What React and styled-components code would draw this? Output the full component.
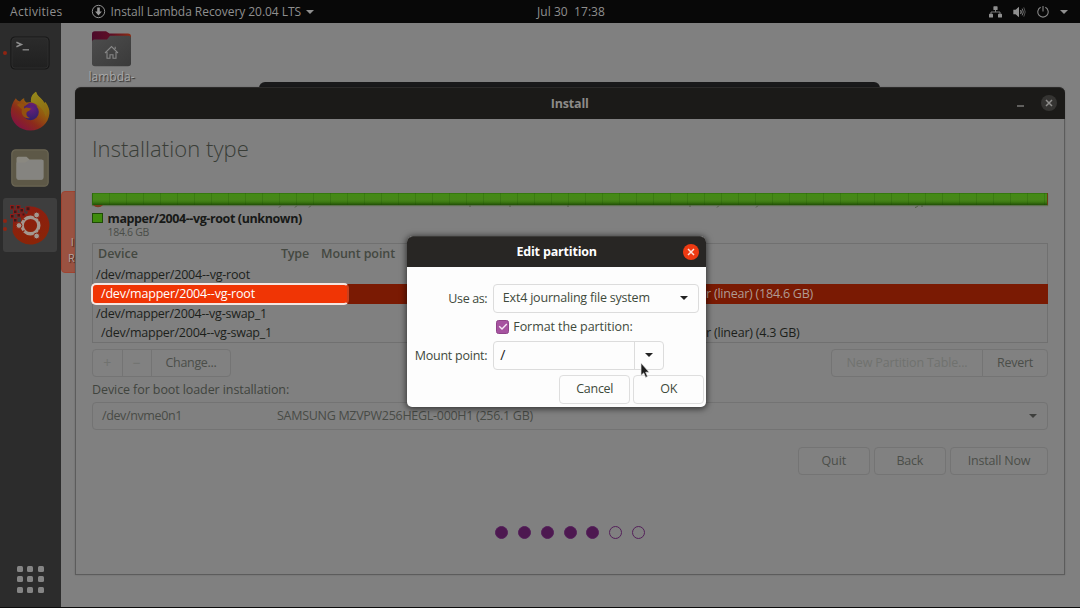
import React from "react";
import styled, { createGlobalStyle } from "styled-components";

const GlobalStyle = createGlobalStyle`
  * { box-sizing: border-box; }
  body { margin: 0; background: #000; overflow: hidden; }
`;

const Label = styled.span`
  flex: none;
  white-space: pre;
  font-family: "Open Sans", "Noto Sans", sans-serif;
  font-size: ${(p) => p.$size || 12.5}px;
  font-weight: ${(p) => p.$weight || 400};
  letter-spacing: ${(p) => p.$ls || 0}px;
  color: ${(p) => p.$color || "inherit"};
  line-height: ${(p) => p.$lh || 18}px;
`;

/* ---------- desktop shell ---------- */

const Desktop = styled.div`
  position: relative;
  display: flex;
  flex-direction: column;
  width: 1080px;
  height: 608px;
  overflow: hidden;
  background: #808080;
  border-bottom: 1px solid #0c0c0c;
`;

const TopBar = styled.header`
  display: grid;
  grid-template-columns: 527px auto 1fr;
  align-items: center;
  flex: none;
  height: 23px;
  padding: 0 12px 0 10px;
  background: #080808;
  color: #8f8f8f;
`;

const BarGroup = styled.div`
  display: flex;
  align-items: center;
  justify-content: ${(p) => (p.$end ? "flex-end" : "flex-start")};
`;

const AppMenu = styled.div`
  display: flex;
  align-items: center;
  gap: 4.5px;
  margin-left: 28.5px;
`;

const TrayIcons = styled.div`
  display: flex;
  align-items: center;
  gap: 11px;
`;

const Caret = styled.i`
  flex: none;
  width: 0;
  height: 0;
  border: ${(p) => p.$s || 4}px solid transparent;
  border-top: ${(p) => (p.$s || 4) + 0.5}px solid ${(p) => p.$color || "#8f8f8f"};
  border-bottom: 0;
`;

const Workspace = styled.div`
  display: flex;
  flex: 1;
  min-height: 0;
`;

const Dock = styled.nav`
  display: flex;
  flex-direction: column;
  align-items: center;
  width: 60.5px;
  padding: 1.5px 0 14.5px;
  background: #2c2c2c;
`;

const DockItem = styled.div`
  position: relative;
  display: grid;
  place-items: center;
  width: 54px;
  height: 54px;
  margin: 1.7px 0;
  border-radius: 3px;
  background: ${(p) => (p.$active ? "#3e3e3e" : "transparent")};
`;

const RunDots = styled.div`
  position: absolute;
  left: ${(p) => p.$x}px;
  top: 0;
  height: 100%;
  display: flex;
  flex-direction: column;
  justify-content: center;
  gap: 4px;
  i {
    width: 4px;
    height: 4px;
    border-radius: 50%;
    background: #8f2412;
  }
`;

const AppsGrid = styled.div`
  display: grid;
  grid-template-columns: repeat(3, 6px);
  gap: 4.3px;
  margin-top: auto;
  i {
    height: 6px;
    border-radius: 1.5px;
    background: #858585;
  }
`;

const DesktopArea = styled.main`
  flex: 1;
  padding: 7px 0 0 28px;
`;

const HomeShortcut = styled.div`
  display: flex;
  flex-direction: column;
  align-items: flex-start;
  gap: 1px;
  color: #a9a9a9;
  text-shadow: 1px 1px 1px #2d2d2d;
`;

const SelectedShortcut = styled.div`
  position: absolute;
  left: 61px;
  top: 191px;
  width: 40px;
  height: 82px;
  padding: 42px 0 0 6px;
  border: 1px solid #a04330;
  border-radius: 4px;
  background: #9a5241;
  color: #b5a49f;
  text-shadow: 1px 1px 1px #3a201a;
  display: flex;
  flex-direction: column;
`;

/* ---------- windows ---------- */

const WindowBehind = styled.div`
  position: absolute;
  left: 259px;
  top: 81.5px;
  width: 621px;
  height: 20px;
  border-radius: 6px 6px 0 0;
  background: #19191a;
`;

const InstallerWindow = styled.section`
  position: absolute;
  left: 74.5px;
  top: 87px;
  width: 990.5px;
  height: 487.5px;
  border-radius: 6px 6px 0 0;
  border: 1px solid #5c5c5c;
  border-top: 0;
  background: #808080;
  box-shadow: 0 0 2px rgba(0, 0, 0, 0.2);
`;

const WindowTitle = styled.div`
  display: grid;
  grid-template-columns: 1fr auto 1fr;
  align-items: center;
  height: 31.5px;
  margin: 0 -1px;
  padding: 1px 8px 0;
  border-radius: 6px 6px 0 0;
  border-top: 1px solid #2b2a29;
  background: #1b1a18;
  color: #8c8b89;
`;

const WindowControls = styled.div`
  display: flex;
  align-items: center;
  justify-content: flex-end;
  gap: 17px;
`;

const Minimise = styled.i`
  width: 7px;
  height: 1.5px;
  margin-top: 4px;
  background: #605f5d;
`;

const RoundButton = styled.span`
  display: grid;
  place-items: center;
  width: 16px;
  height: 16px;
  margin-top: -1px;
  border-radius: 50%;
  background: ${(p) => p.$bg};
`;

const WindowBody = styled.div`
  display: flex;
  flex-direction: column;
  padding: 15.5px 16px 0 16.5px;
  color: #40443e;
`;

const UsageBar = styled.div`
  height: 12px;
  margin-top: 31px;
  background:
    repeating-linear-gradient(90deg, transparent 0 16px, rgba(20, 70, 0, 0.2) 16px 17px),
    linear-gradient(#2f6e0c 0, #448a16 12%, #47861a 55%, #3d7a12 75%, #214f07 100%);
  border-left: 1px solid #2d6a0c;
  border-right: 1px solid #6b3d12;
  box-shadow: 0 1px 1px rgba(50, 90, 20, 0.45);
`;

const BarResidue = styled.div`
  display: flex;
  height: 8px;
  margin-bottom: -1px;
`;

const Legend = styled.div`
  display: flex;
  gap: 5px;
  height: 31px;
`;

const Swatch = styled.i`
  width: 10.5px;
  height: 10.5px;
  margin-top: 0.5px;
  border: 1px solid #1d4a04;
  background: #3f8c0c;
`;

const LegendText = styled.div`
  display: flex;
  flex-direction: column;
  margin-top: -2px;
`;

const Table = styled.div`
  position: relative;
  height: 100px;
  border: 1px solid #707070;
`;

const HeadRow = styled.div`
  display: grid;
  grid-template-columns: 183px 40px auto;
  height: 20.5px;
  padding: 1px 0 0 5px;
  color: #444841;
`;

const DeviceRow = styled.div`
  display: grid;
  grid-template-columns: 605px auto;
  align-items: center;
  height: 19.5px;
  margin: 0 -1px;
  padding-top: 1px;
  padding-left: ${(p) => (p.$child ? 9 : 4)}px;
  color: ${(p) => (p.$selected ? "#b09a93" : "#1c1f1b")};
  background: ${(p) => (p.$selected ? "#7a1a03" : "transparent")};
`;

const Spotlight = styled.div`
  position: absolute;
  left: -2px;
  top: 38.5px;
  width: 257.5px;
  height: 22px;
  padding: 1px 0 0 8px;
  display: flex;
  align-items: center;
  border: 2px solid #f4e6e2;
  border-right-color: #c9401d;
  border-radius: 5px;
  background: #f03505;
  color: #fff;
`;

const Line = styled.div`
  display: flex;
  align-items: center;
  gap: ${(p) => p.$gap || 0}px;
  margin-top: ${(p) => p.$mt || 0}px;
  justify-content: ${(p) => p.$justify || "flex-start"};
`;

const PushButton = styled.button`
  display: flex;
  align-items: center;
  justify-content: center;
  flex: none;
  width: ${(p) => p.$w}px;
  height: 28.5px;
  padding: ${(p) => (p.$light ? 0 : 1)}px 0 0;
  border: 1px solid ${(p) => (p.$light ? "#dedede" : "#747474")};
  border-radius: ${(p) => p.$r || "4px"};
  background: ${(p) => (p.$light ? "#fdfdfd" : "#818181")};
  color: ${(p) => (p.$off ? "#70726f" : p.$light ? "#3f4a3c" : "#4b4e49")};
  & + & {
    ${(p) => p.$joined && "margin-left: -1px;"}
  }
`;

const BootCombo = styled.div`
  display: grid;
  grid-template-columns: 175px 1fr auto;
  align-items: center;
  height: 28px;
  margin-top: 2.5px;
  padding: 1px 10px 0 9px;
  border: 1px solid #737373;
  border-radius: 4px;
  color: #484b46;
`;

const Progress = styled.div`
  display: flex;
  justify-content: center;
  gap: 9.8px;
  margin-top: 50.5px;
`;

const Step = styled.i`
  width: 13px;
  height: 13px;
  border-radius: 50%;
  border: 1px solid #54205a;
  background: ${(p) => (p.$done ? "#4d1850" : "transparent")};
`;

/* ---------- dialog ---------- */

const Dialog = styled.section`
  position: absolute;
  left: 407.3px;
  top: 235.5px;
  width: 298.7px;
  height: 171px;
  border-radius: 6px 6px 5px 5px;
  background: #fdfdfd;
  box-shadow: 0 1px 6px 1px rgba(0, 0, 0, 0.6);
`;

const DialogTitle = styled.div`
  display: grid;
  grid-template-columns: 1fr auto 1fr;
  align-items: center;
  height: 31.5px;
  padding: 1px 7px 0;
  border-radius: 6px 6px 0 0;
  border-top: 1px solid #3b3a38;
  background: #282624;
  color: #fff;
`;

const Form = styled.div`
  display: grid;
  grid-template-columns: 80px 1fr;
  grid-template-rows: 28.5px 28.5px 28.5px;
  column-gap: 5.5px;
  align-items: center;
  justify-items: start;
  padding: 17px 7px 0 0;
  color: #3f4a3c;
`;

const FieldLabel = styled.div`
  justify-self: end;
  display: flex;
  padding-top: ${(p) => p.$drop || 0}px;
`;

const Select = styled.div`
  display: flex;
  align-items: center;
  justify-content: space-between;
  width: 206px;
  height: 28.5px;
  padding: 0 10px 0 9px;
  border: 1px solid #dcdcdc;
  border-radius: 4px;
`;

const Check = styled.div`
  display: flex;
  align-items: center;
  gap: 4px;
  padding-left: 3px;
`;

const CheckBox = styled.span`
  display: grid;
  place-items: center;
  width: 13.5px;
  height: 13.5px;
  border-radius: 2.5px;
  background: #a653a0;
  border: 1px solid #8f4489;
`;

const ComboEntry = styled.div`
  display: grid;
  grid-template-columns: 140px 1fr;
  width: 171px;
  height: 28.5px;
  border: 1px solid #dcdcdc;
  border-radius: 4px;
`;

const EntryCell = styled.div`
  display: flex;
  align-items: center;
  justify-content: ${(p) => (p.$arrow ? "center" : "flex-start")};
  padding-left: ${(p) => (p.$arrow ? 0 : 6.5)}px;
  border-left: ${(p) => (p.$arrow ? "1px solid #dcdcdc" : "0")};
  color: #222;
`;

const DialogActions = styled.div`
  display: flex;
  justify-content: flex-end;
  gap: 3.5px;
  padding: 5.5px 1.5px 0 0;
`;

const Pointer = styled.svg`
  position: absolute;
  left: 640px;
  top: 362px;
`;

/* ---------- icons ---------- */

const DownloadIcon = () => (
  <svg width="15" height="15" viewBox="0 0 15 15">
    <circle cx="7.5" cy="7.5" r="6.2" fill="none" stroke="#8f8f8f" strokeWidth="1" />
    <path d="M6.2 3.4h2.6v4h2.1L7.5 11.4 4.1 7.4h2.1z" fill="#9a9a9a" />
  </svg>
);

const NetworkIcon = () => (
  <svg width="13" height="12" viewBox="0 0 13 12" fill="#8f8f8f">
    <rect x="4.4" y="0.3" width="4.2" height="3.8" rx=".6" />
    <rect x="0" y="7.7" width="4" height="3.8" rx=".6" />
    <rect x="9" y="7.7" width="4" height="3.8" rx=".6" />
    <path d="M6.5 4v2M2 8V6h9v2" fill="none" stroke="#7d7d7d" strokeWidth="1" />
  </svg>
);

const VolumeIcon = () => (
  <svg width="13" height="12" viewBox="0 0 13 12">
    <path d="M.3 3.8h2.2L6 .8v10.4L2.5 8.2H.3z" fill="#8f8f8f" />
    <path d="M7.6 4q1.3 2 0 4" fill="none" stroke="#8f8f8f" strokeWidth="1.2" />
    <path d="M9.2 2.6q2.2 3.4 0 6.8" fill="none" stroke="#777" strokeWidth="1" />
    <path d="M10.8 1.4q2.8 4.6 0 9.2" fill="none" stroke="#5c5c5c" strokeWidth=".9" />
  </svg>
);

const PowerIcon = () => (
  <svg width="12" height="12" viewBox="0 0 12 12" fill="none" stroke="#858585" strokeWidth="1.1">
    <path d="M3.7 1.3a5.2 5.2 0 1 0 4.6 0" />
    <path d="M6 0v5.4" />
  </svg>
);

const CrossIcon = ({ color, size = 8 }) => (
  <svg width={size} height={size} viewBox="0 0 8 8">
    <path d="M1 1l6 6M7 1L1 7" stroke={color} strokeWidth="1.5" />
  </svg>
);

const TerminalIcon = () => (
  <svg width="40" height="34" viewBox="0 0 40 34">
    <defs>
      <linearGradient id="term" x1="0" y1="0" x2="0" y2="1">
        <stop offset="0" stopColor="#2b2b2b" />
        <stop offset="1" stopColor="#202020" />
      </linearGradient>
    </defs>
    <rect x="1" y="1" width="38" height="32" rx="4" fill="url(#term)" stroke="#171717" strokeWidth="1.2" />
    <rect x="2" y="2" width="36" height="30" rx="3" fill="none" stroke="#303030" strokeWidth=".8" />
    <path d="M6.4 6.3l5 2.2-5 2.3" fill="none" stroke="#8e8e8e" strokeWidth="1.5" />
    <path d="M12.6 13.8h6.4" stroke="#858585" strokeWidth="1.4" />
  </svg>
);

const FirefoxIcon = () => (
  <svg width="40" height="40" viewBox="0 0 40 40">
    <defs>
      <linearGradient id="fox" x1=".85" y1=".1" x2=".2" y2=".9">
        <stop offset="0" stopColor="#918516" />
        <stop offset=".4" stopColor="#93570f" />
        <stop offset=".7" stopColor="#8c2a1b" />
        <stop offset="1" stopColor="#83143f" />
      </linearGradient>
      <radialGradient id="globe" cx=".55" cy=".3" r=".7">
        <stop offset="0" stopColor="#661f78" />
        <stop offset="1" stopColor="#312069" />
      </radialGradient>
      <linearGradient id="flame" x1="0" y1="0" x2=".4" y2="1">
        <stop offset="0" stopColor="#948b1c" />
        <stop offset="1" stopColor="#8f6c12" />
      </linearGradient>
    </defs>
    <path d="M5.8 7.2C7 9 8.3 10 10 10.4C11.5 8.6 13 7.5 14.2 7.3C14 9 14.6 10.5 16.5 11.4L21 11C20.5 6.8 22.5 3 26 .8C26.8 4.4 29.8 6.3 32.5 9.2L34.2 12L35.5 11C38.4 15 39.8 19 39.4 22.5C38.5 32.5 30.5 39.5 20.5 39.5C9.5 39.5 1 31.5 .8 21.5C.7 16 2.8 10.8 5.8 7.2Z" fill="url(#fox)" />
    <path d="M21 11C20.5 6.8 22.5 3 26 .8C26.8 4.4 29.8 6.3 32.5 9.2C36.5 13.5 38.2 19 36 26C34 19 29 13 21 11Z" fill="url(#flame)" />
    <circle cx="20.6" cy="21" r="8.2" fill="url(#globe)" />
    <path d="M14 17.5C17 15.5 19 17.5 21 17.5C20.5 19.5 18 20 17 21C15.5 23 17 26 20 27C14 28.5 10.5 23 12 18.5L7 14C9 11.5 12 12 14 13.5Z" fill="#93500f" />
    <path d="M17.5 13.2C20 10.8 25 11.6 27.4 15.4C24.5 14 21 14 17.5 13.2Z" fill="#641e70" />
  </svg>
);

const FilesIcon = () => (
  <svg width="38" height="38" viewBox="0 0 38 38">
    <rect x=".8" y=".8" width="36.4" height="36.4" rx="4" fill="#5d5847" stroke="#6a6553" strokeWidth="1.2" />
    <path d="M5.5 28V9.5Q5.5 7.8 7.2 7.8H15.500L18.5 10.6H30.600Q32.4 10.6 32.4 12.4V29Q32.4 30.8 30.6 30.8H7.200Q5.5 30.8 5.5 29Z" fill="#8a8880" />
    <path d="M5.5 28V13.5H14.500L18 11H32.400V28Q32.4 30.4 30.6 30.4H7.200Q5.5 30.4 5.5 28Z" fill="#858480" />
  </svg>
);

const InstallerIcon = () => (
  <svg width="42" height="42" viewBox="0 0 42 42">
    <defs>
      <linearGradient id="disc" x1="0" y1="0" x2=".3" y2="1">
        <stop offset="0" stopColor="#8e1d12" />
        <stop offset="1" stopColor="#8a2408" />
      </linearGradient>
    </defs>
    <path d="M21 2.5A19 19 0 1 1 3.6 28L4 18H12V10H18Z" fill="url(#disc)" />
    <g fill="#3c1a18" stroke="#8a1d1a" strokeWidth="1">
      <rect x="1.5" y="1.5" width="3.5" height="3.5" />
      <rect x="7.5" y="1.5" width="3.5" height="3.5" />
      <rect x="4.5" y="6" width="3.5" height="3.5" />
      <rect x="11" y="4.5" width="3.5" height="3.5" />
      <rect x="17" y="2.8" width="4" height="4" />
      <rect x="1.5" y="10.5" width="3.5" height="3.5" />
      <rect x="8" y="9.5" width="3.5" height="3.5" />
      <rect x="13" y="9" width="3" height="3" />
      <rect x="4.5" y="14.5" width="3.5" height="3.5" />
    </g>
    <circle cx="21.5" cy="21.5" r="8.3" fill="none" stroke="#a3978f" strokeWidth="3.4" />
    <g fill="#a3978f" stroke="#8a2210" strokeWidth="1">
      <circle cx="10" cy="21.5" r="2.9" />
      <circle cx="27.6" cy="11" r="2.9" />
      <circle cx="27.6" cy="32" r="2.9" />
    </g>
    <path d="M29.5 17l3.500-2M29.5 26l3.500 2M13 14l2.500 2M13 28.500l2.500-2" stroke="#8a2210" strokeWidth="1.2" />
  </svg>
);

const FolderSvg = styled.svg`
  display: block;
`;

const HomeFolderIcon = () => (
  <FolderSvg width="45" height="37" viewBox="0 0 45 37">
    <defs>
      <linearGradient id="back" x1="0" y1="0" x2="1" y2="0">
        <stop offset="0" stopColor="#4c0a2a" />
        <stop offset=".5" stopColor="#5f0f25" />
        <stop offset="1" stopColor="#8c2c13" />
      </linearGradient>
      <linearGradient id="front" x1="0" y1="0" x2="1" y2="1">
        <stop offset="0" stopColor="#4d4d4d" />
        <stop offset="1" stopColor="#3a3a3a" />
      </linearGradient>
    </defs>
    <path d="M3 4Q3 1.2 5.8 1.2H17L20.5 3.500H39Q42 3.5 42 6.500V18H3Z" fill="url(#back)" />
    <path d="M3 12Q3 9.5 5.5 9.500H18L21 5.800H39.500Q42 5.8 42 8.500V33.500Q42 36.3 39 36.300H6Q3 36.3 3 33.500Z" fill="url(#front)" />
    <path d="M16 23l6.500-6.500 6.500 6.500M18 22v6.300h3v-3.600h3v3.600h3V22M26.200 19v-2.300" fill="none" stroke="#888" strokeWidth="1.1" />
  </FolderSvg>
);

const ClippedBadge = () => (
  <svg width="956" height="5" viewBox="0 0 956 5">
    <path d="M1 0H11Q9 2.2 6 2.2Q3 2.2 1 0Z" fill="#7b3a1d" />
    <path d="M187 2.500l2-2M203 2.500l2-2M217 2.500l2-2M378 2v-2M418 2v-2M476 2v-2M598 2v-2M625 2.500l2-2M664 2.500l2-2M823 2.500q2 0 3-2M830 2v-2" stroke="#4f5d40" strokeWidth="1" fill="none" />
  </svg>
);

const rows = [
  { name: "/dev/mapper/2004--vg-root", ls: -0.2 },
  { name: "/dev/mapper/2004--vg-root", ls: -0.2, child: true, selected: true, info: "r (linear) (184.6 GB)", infoLs: -0.22 },
  { name: "/dev/mapper/2004--vg-swap_1", ls: -0.23 },
  { name: "/dev/mapper/2004--vg-swap_1", ls: -0.23, child: true, info: "r (linear) (4.3 GB)", infoLs: -0.2 },
];

export default function App() {
  return (
    <Desktop>
      <GlobalStyle />
      <TopBar>
        <BarGroup>
          <Label $size={12} $ls={0.31}>Activities</Label>
          <AppMenu>
            <DownloadIcon />
            <Label $size={12} $ls={-0.05}>Install Lambda Recovery 20.04 LTS</Label>
            <Caret />
          </AppMenu>
        </BarGroup>
        <Label $size={12} $ls={0.05}>Jul 30  17:38</Label>
        <BarGroup $end>
          <TrayIcons>
            <NetworkIcon />
            <VolumeIcon />
            <PowerIcon />
            <Caret />
          </TrayIcons>
        </BarGroup>
      </TopBar>

      <Workspace>
        <Dock>
          <DockItem>
            <RunDots $x={0}><i /></RunDots>
            <TerminalIcon />
          </DockItem>
          <DockItem><FirefoxIcon /></DockItem>
          <DockItem><FilesIcon /></DockItem>
          <DockItem $active>
            <InstallerIcon />
            <RunDots $x={0}><i /><i /></RunDots>
          </DockItem>
          <AppsGrid>
            {Array.from({ length: 9 }, (_, i) => <i key={i} />)}
          </AppsGrid>
        </Dock>
        <DesktopArea>
          <HomeShortcut>
            <HomeFolderIcon />
            <Label $size={12}>lambda-</Label>
          </HomeShortcut>
        </DesktopArea>
      </Workspace>

      <SelectedShortcut>
        <Label $size={11} $lh={16}> I</Label>
        <Label $size={11} $lh={16}>R</Label>
      </SelectedShortcut>

      <WindowBehind />

      <InstallerWindow>
        <WindowTitle>
          <span />
          <Label $weight={700} $ls={-0.17}>Install</Label>
          <WindowControls>
            <Minimise />
            <RoundButton $bg="#353432"><CrossIcon color="#8f8e8c" /></RoundButton>
          </WindowControls>
        </WindowTitle>
        <WindowBody>
          <Label $size={22} $weight={300} $ls={0.05} $lh={28} $color="#393d37">Installation type</Label>
          <UsageBar />
          <BarResidue><ClippedBadge /></BarResidue>
          <Legend>
            <Swatch />
            <LegendText>
              <Label $weight={700} $ls={-0.39} $lh={17} $color="#171917">mapper/2004--vg-root (unknown)</Label>
              <Label $size={10.5} $ls={-0.3} $lh={11} $color="#4a4d48">184.6 GB</Label>
            </LegendText>
          </Legend>
          <Table>
            <HeadRow>
              <Label $weight={600}>Device</Label>
              <Label $weight={600} $ls={-0.19}>Type</Label>
              <Label $weight={600} $ls={-0.09}>Mount point</Label>
            </HeadRow>
            {rows.map((r, i) => (
              <DeviceRow key={i} $child={r.child} $selected={r.selected}>
                {r.selected ? <span /> : <Label $ls={r.ls}>{r.name}</Label>}
                {r.info && <Label $ls={r.infoLs}>{r.info}</Label>}
              </DeviceRow>
            ))}
            <Spotlight><Label $ls={-0.2}>/dev/mapper/2004--vg-root</Label></Spotlight>
          </Table>
          <Line $mt={5.5} $justify="space-between">
            <Line>
              <PushButton $w={30.5} $joined $off $r="4px 0 0 4px"><Label $size={14}>+</Label></PushButton>
              <PushButton $w={30.5} $joined $off $r="0"><Label $size={14}>−</Label></PushButton>
              <PushButton $w={80} $joined $r="0 4px 4px 0"><Label $ls={-0.31}>Change...</Label></PushButton>
            </Line>
            <Line>
              <PushButton $w={152} $joined $off $r="4px 0 0 4px"><Label $ls={-0.14}>New Partition Table...</Label></PushButton>
              <PushButton $w={66} $joined $r="0 4px 4px 0"><Label $ls={-0.26}>Revert</Label></PushButton>
            </Line>
          </Line>
          <Line $mt={4}><Label $ls={-0.09}>Device for boot loader installation:</Label></Line>
          <BootCombo>
            <Label $ls={-0.38}>/dev/nvme0n1</Label>
            <Label $ls={-0.29}>SAMSUNG MZVPW256HEGL-000H1 (256.1 GB)</Label>
            <Caret $color="#3e3f3d" />
          </BootCombo>
          <Line $mt={17} $gap={5.5} $justify="flex-end">
            <PushButton $w={71.5}><Label $ls={-0.13}>Quit</Label></PushButton>
            <PushButton $w={71.5}><Label $ls={-0.27}>Back</Label></PushButton>
            <PushButton $w={98}><Label $ls={-0.2}>Install Now</Label></PushButton>
          </Line>
          <Progress>
            {[1, 1, 1, 1, 1, 0, 0].map((d, i) => <Step key={i} $done={d} />)}
          </Progress>
        </WindowBody>
      </InstallerWindow>

      <Dialog>
        <DialogTitle>
          <span />
          <Label $weight={700} $ls={-0.18}>Edit partition</Label>
          <WindowControls>
            <RoundButton $bg="#ee3a12"><CrossIcon color="#fbe3db" /></RoundButton>
          </WindowControls>
        </DialogTitle>
        <Form>
          <FieldLabel $drop={1}><Label $ls={-0.36}>Use as:</Label></FieldLabel>
          <Select>
            <Label $ls={-0.2}>Ext4 journaling file system</Label>
            <Caret $color="#222" />
          </Select>
          <span />
          <Check>
            <CheckBox>
              <svg width="10" height="9" viewBox="0 0 10 9">
                <path d="M1.2 4.3l2.8 2.7L8.8 2" fill="none" stroke="#f6e8f5" strokeWidth="1.4" />
              </svg>
            </CheckBox>
            <Label $ls={-0.08}>Format the partition:</Label>
          </Check>
          <FieldLabel $drop={1}><Label $ls={-0.25}>Mount point:</Label></FieldLabel>
          <ComboEntry>
            <EntryCell><Label $size={14}>/</Label></EntryCell>
            <EntryCell $arrow><Caret $color="#222" /></EntryCell>
          </ComboEntry>
        </Form>
        <DialogActions>
          <PushButton $light $w={71.5}><Label $ls={-0.28}>Cancel</Label></PushButton>
          <PushButton $light $w={71.5}><Label $ls={-0.2}>OK</Label></PushButton>
        </DialogActions>
      </Dialog>

      <Pointer width="10" height="17" viewBox="0 0 10 17">
        <path d="M1 1v12.500l2.700-2.600 1.900 4.500 2-.9-1.900-4.300h3.500z" fill="#1c1c1c" stroke="#e6e6e6" strokeWidth=".7" />
      </Pointer>
    </Desktop>
  );
}
